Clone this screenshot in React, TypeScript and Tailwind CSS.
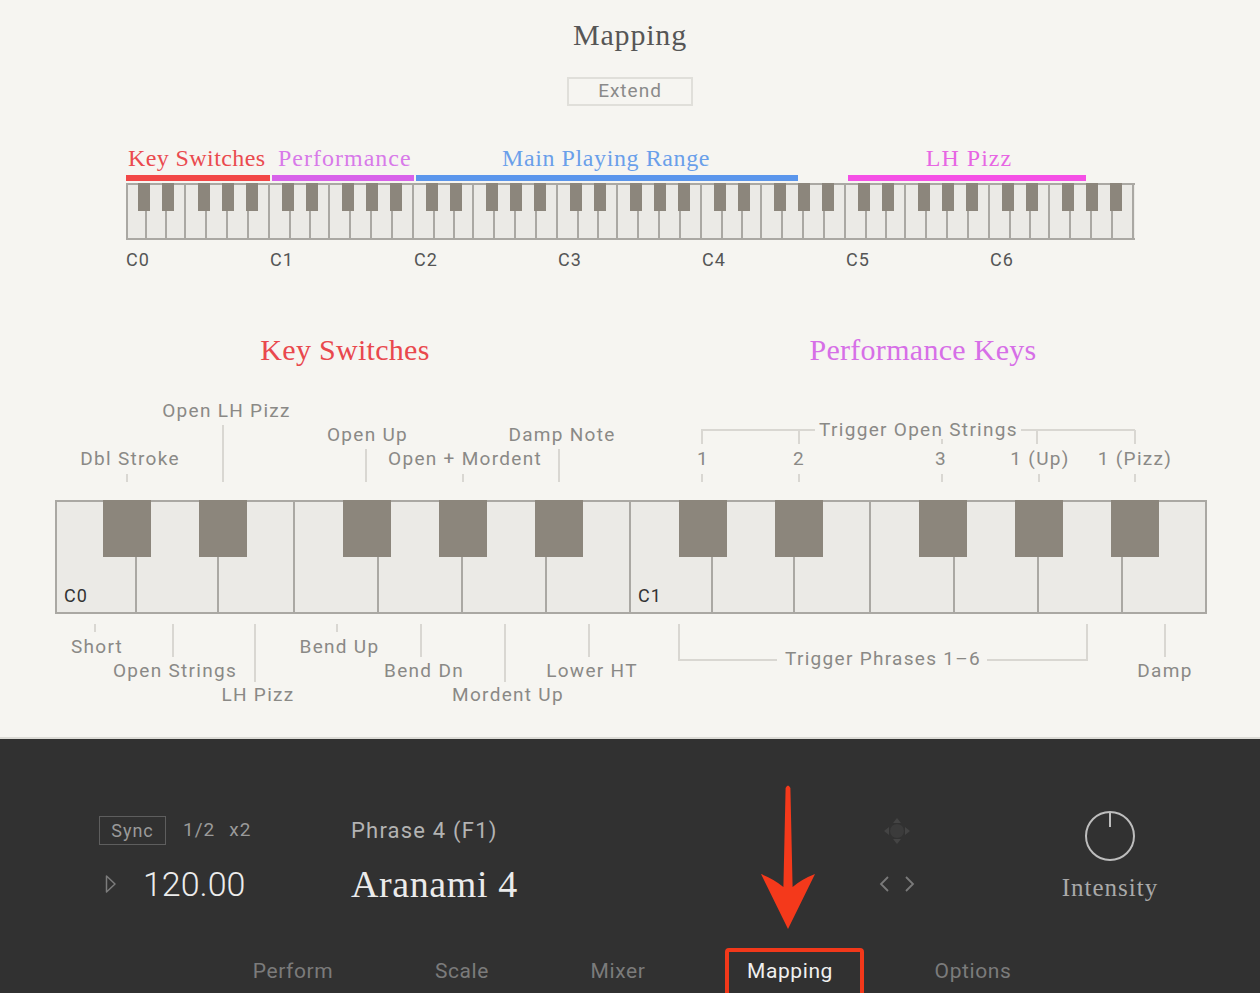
import React from "react";

const sans = "font-['Roboto',sans-serif]";
const serif = "font-['Liberation_Serif',serif]";

type KbProps = {
  octaves: number;
  widths: number[];
  unit: number;
  height: number;
  blackH: number;
  blackW: number;
  labels?: boolean;
};

function Keyboard({ octaves, widths, unit, height, blackH, blackW, labels }: KbProps) {
  const whites: { w: number; label: string | null }[] = [];
  for (let o = 0; o < octaves; o++) {
    widths.forEach((w, i) => {
      whites.push({ w: o === 0 && i === 0 ? w - 2 : w, label: i === 0 && labels ? `C${o}` : null });
    });
  }
  const blacks: number[] = [];
  for (let o = 0; o < octaves; o++) {
    [1, 3, 6, 8, 10].forEach((s) => blacks.push(o * 12 * unit + s * unit - 2));
  }
  return (
    <div className="relative flex border-y-2 border-l-2 border-[#aaa8a3] bg-[#ebeae6]" style={{ height }}>
      {whites.map((k, i) => (
        <div key={i} className="relative h-full shrink-0 border-r-2 border-[#aaa8a3]" style={{ width: k.w }}>
          {k.label && (
            <span className={`absolute left-[7px] top-[94px] -translate-y-1/2 text-[18px] leading-none tracking-[1px] text-[#333] ${sans}`}>
              {k.label}
            </span>
          )}
        </div>
      ))}
      {blacks.map((left, i) => (
        <div key={i} className="absolute top-[-2px] bg-[#8c867c]" style={{ left, width: blackW, height: blackH }} />
      ))}
    </div>
  );
}

const OX = 55;
const OY = 370;

const annLabels: { t: string; x: number; y: number }[] = [
  { t: "Open LH Pizz", x: 226.5, y: 410 },
  { t: "Dbl Stroke", x: 130, y: 458 },
  { t: "Open Up", x: 367.5, y: 434 },
  { t: "Open + Mordent", x: 465, y: 458 },
  { t: "Damp Note", x: 562, y: 434 },
  { t: "Trigger Open Strings", x: 918.5, y: 429 },
  { t: "1", x: 703, y: 458 },
  { t: "2", x: 799, y: 458 },
  { t: "3", x: 941, y: 458 },
  { t: "1 (Up)", x: 1040, y: 458 },
  { t: "1 (Pizz)", x: 1135, y: 458 },
  { t: "Short", x: 97, y: 646 },
  { t: "Open Strings", x: 175, y: 670 },
  { t: "LH Pizz", x: 258, y: 694 },
  { t: "Bend Up", x: 339.5, y: 646 },
  { t: "Bend Dn", x: 424, y: 670 },
  { t: "Mordent Up", x: 508, y: 694 },
  { t: "Lower HT", x: 592, y: 670 },
  { t: "Trigger Phrases 1\u20136", x: 883, y: 658 },
  { t: "Damp", x: 1165, y: 670 },
];

const vLines: [number, number, number][] = [
  [223, 425, 482],
  [127, 474, 482],
  [366, 449, 482],
  [463, 474, 482],
  [559, 449, 482],
  [702, 430, 444],
  [799, 430, 444],
  [942, 439, 444],
  [1037, 430, 444],
  [1135, 430, 444],
  [702, 474, 482],
  [799, 474, 482],
  [942, 474, 482],
  [1039, 474, 482],
  [1135, 474, 482],
  [95, 624, 632],
  [173, 624, 657],
  [255, 624, 682],
  [337, 624, 632],
  [421, 624, 657],
  [505, 624, 682],
  [589, 624, 657],
  [679, 624, 661],
  [1087, 624, 661],
  [1165, 624, 657],
];

const hLines: [number, number, number][] = [
  [702, 816, 430],
  [1022, 1136, 430],
  [679, 778, 660],
  [988, 1089, 660],
];

function MoveIcon() {
  return (
    <svg width="28" height="28" viewBox="0 0 28 28">
      <circle cx="14" cy="14" r="7" fill="#3b3b3b" />
      <path d="M14 1 L18 6 L10 6 Z" fill="#444" />
      <path d="M14 27 L18 22 L10 22 Z" fill="#444" />
      <path d="M1 14 L6 10 L6 18 Z" fill="#444" />
      <path d="M27 14 L22 10 L22 18 Z" fill="#444" />
    </svg>
  );
}

export default function App() {
  return (
    <div className="relative flex h-[993px] w-full flex-col overflow-hidden">
      {/* top light panel */}
      <div className="flex h-[739px] shrink-0 flex-col border-b-2 border-[#dcdbd6] bg-[#f6f5f1]">
        <div className={`pt-[17px] text-center text-[30px] leading-[36px] tracking-[0.8px] text-[#565656] ${serif}`}>Mapping</div>
        <div className="mt-[24px] flex justify-center">
          <div className={`flex h-[29px] w-[126px] items-center justify-center border-2 border-[#e0dfda] text-[19px] tracking-[1px] text-[#8a8a8a] ${sans}`}>
            Extend
          </div>
        </div>

        {/* small keyboard overview */}
        <div className="ml-[126px] mt-[34px] w-[1009px]">
          <div className="relative h-[43px]">
            <span className={`absolute left-[2px] top-[18px] -translate-y-1/2 whitespace-nowrap text-[24px] leading-none tracking-[0.4px] text-[#ea4a4f] ${serif}`}>Key Switches</span>
            <span className={`absolute left-[152px] top-[18px] -translate-y-1/2 whitespace-nowrap text-[24px] leading-none tracking-[1px] text-[#d87ae9] ${serif}`}>Performance</span>
            <span className={`absolute left-[480px] top-[18px] -translate-x-1/2 -translate-y-1/2 whitespace-nowrap text-[24px] leading-none tracking-[0.6px] text-[#6a9fea] ${serif}`}>Main Playing Range</span>
            <span className={`absolute left-[843px] top-[18px] -translate-x-1/2 -translate-y-1/2 whitespace-nowrap text-[24px] leading-none tracking-[1px] text-[#e766e3] ${serif}`}>LH Pizz</span>
            <div className="absolute left-0 top-[35px] h-[6px] w-[144px] bg-[#f24747]" />
            <div className="absolute left-[146px] top-[35px] h-[6px] w-[142px] bg-[#d862ea]" />
            <div className="absolute left-[290px] top-[35px] h-[6px] w-[382px] bg-[#5b96ec]" />
            <div className="absolute left-[722px] top-[35px] h-[6px] w-[238px] bg-[#f550e6]" />
          </div>
          <Keyboard octaves={7} widths={[20.5, 20.5, 19, 21, 21, 21, 21]} unit={12} height={57} blackH={28} blackW={12} />
          <div className={`mt-[10px] flex h-[20px] text-[18px] leading-[20px] tracking-[1px] text-[#555] ${sans}`}>
            {["C0", "C1", "C2", "C3", "C4", "C5", "C6"].map((c) => (
              <span key={c} className="w-[144px] shrink-0">{c}</span>
            ))}
          </div>
        </div>

        {/* section titles */}
        <div className={`ml-[55px] mt-[60px] flex h-[40px] items-center text-[30px] leading-[40px] ${serif}`}>
          <div className="w-[580px] text-center tracking-[0.3px] text-[#e9484d]">Key Switches</div>
          <div className="w-[576px] text-center tracking-[0.3px] text-[#d66fe7]">Performance Keys</div>
        </div>

        {/* big keyboard diagram */}
        <div className="relative ml-[55px] h-[329px] w-[1152px]">
          <div className="pt-[130px]">
            <Keyboard octaves={2} widths={[82, 82, 76, 84, 84, 84, 84]} unit={48} height={114} blackH={57} blackW={48} labels />
          </div>
          {vLines.map(([x, y1, y2], i) => (
            <div key={`v${i}`} className="absolute w-[2px] bg-[#d9d7d2]" style={{ left: x - OX - 1, top: y1 - OY, height: y2 - y1 }} />
          ))}
          {hLines.map(([x1, x2, y], i) => (
            <div key={`h${i}`} className="absolute h-[2px] bg-[#d9d7d2]" style={{ left: x1 - OX - 1, top: y - OY - 1, width: x2 - x1 }} />
          ))}
          {annLabels.map((l, i) => (
            <span
              key={i}
              className={`absolute -translate-x-1/2 -translate-y-1/2 whitespace-nowrap text-[19px] leading-none tracking-[1.3px] text-[#8a8986] ${sans}`}
              style={{ left: l.x - OX, top: l.y - OY }}
            >
              {l.t}
            </span>
          ))}
        </div>
      </div>

      {/* bottom dark panel */}
      <div className="flex flex-1 flex-col bg-[#313131]">
        <div className="ml-[99px] mt-[77px] flex h-[88px]">
          {/* tempo column */}
          <div className="flex w-[252px] shrink-0 flex-col">
            <div className={`flex h-[29px] items-center text-[19px] tracking-[1px] text-[#9a9a9a] ${sans}`}>
              <div className="flex h-[29px] w-[67px] items-center justify-center border-[1.5px] border-[#5e5e5e] text-[18px]">Sync</div>
              <span className="ml-[17px]">1/2</span>
              <span className="ml-[14px]">x2</span>
            </div>
            <div className="mt-[19px] flex h-[40px] items-center">
              <svg width="14" height="20" viewBox="0 0 14 20" className="ml-[5px]">
                <path d="M2.5 2 L11 10 L2.5 18 Z" fill="none" stroke="#7c7c7c" strokeWidth="1.5" strokeLinejoin="round" />
              </svg>
              <span className={`ml-[25px] text-[34px] font-light leading-[40px] text-[#ececec] ${sans}`}>120.00</span>
            </div>
          </div>
          {/* phrase column */}
          <div className="flex w-[526px] shrink-0 flex-col">
            <div className={`h-[29px] text-[22px] leading-[29px] tracking-[1.2px] text-[#b3b3b3] ${sans}`}>Phrase 4 (F1)</div>
            <div className={`mt-[19px] h-[40px] text-[38px] leading-[40px] tracking-[0.6px] text-[#ebebeb] ${serif}`}>Aranami 4</div>
          </div>
          {/* nav icons */}
          <div className="flex w-[40px] shrink-0 flex-col items-center">
            <div className="-mt-[0px] flex h-[29px] items-center">
              <MoveIcon />
            </div>
            <div className="mt-[19px] flex h-[40px] items-center gap-[14px]">
              <svg width="12" height="18" viewBox="0 0 12 18">
                <path d="M10 2 L3 9 L10 16" fill="none" stroke="#7a7a7a" strokeWidth="1.8" />
              </svg>
              <svg width="12" height="18" viewBox="0 0 12 18">
                <path d="M2 2 L9 9 L2 16" fill="none" stroke="#7a7a7a" strokeWidth="1.8" />
              </svg>
            </div>
          </div>
          {/* knob */}
          <div className="-mt-[6px] ml-[133px] flex w-[120px] shrink-0 flex-col items-center">
            <svg width="52" height="52" viewBox="0 0 52 52">
              <circle cx="26" cy="26" r="24" fill="none" stroke="#bdbdbd" strokeWidth="2" />
              <line x1="26" y1="2" x2="26" y2="17" stroke="#bdbdbd" strokeWidth="2" />
            </svg>
            <div className={`mt-[11px] text-[25px] leading-[30px] tracking-[1px] text-[#a9a9a9] ${serif}`}>Intensity</div>
          </div>
        </div>

        {/* tabs */}
        <div className={`mt-[52px] flex h-[30px] items-center text-[21px] leading-[30px] tracking-[0.6px] text-[#7b7b7b] ${sans}`}>
          <span className="ml-[223px] w-[140px] text-center">Perform</span>
          <span className="ml-[29px] w-[140px] text-center">Scale</span>
          <span className="ml-[16px] w-[140px] text-center">Mixer</span>
          <span className="ml-[32px] w-[140px] text-center text-[#f0f0f0]">Mapping</span>
          <span className="ml-[43px] w-[140px] text-center">Options</span>
        </div>
      </div>

      {/* annotation overlays */}
      <div className="absolute left-[725px] top-[948px] h-[52px] w-[139px] rounded-[4px] border-4 border-[#f2381a]" />
      <svg className="absolute left-[755px] top-[783px]" width="66" height="150" viewBox="0 0 66 150">
        <path d="M30.6 5 Q33 0 35.4 5 L37.6 104 Q47 96 60 91 L33 146 L6 91 Q19 96 28.4 104 Z" fill="#f4391b" />
      </svg>
    </div>
  );
}
